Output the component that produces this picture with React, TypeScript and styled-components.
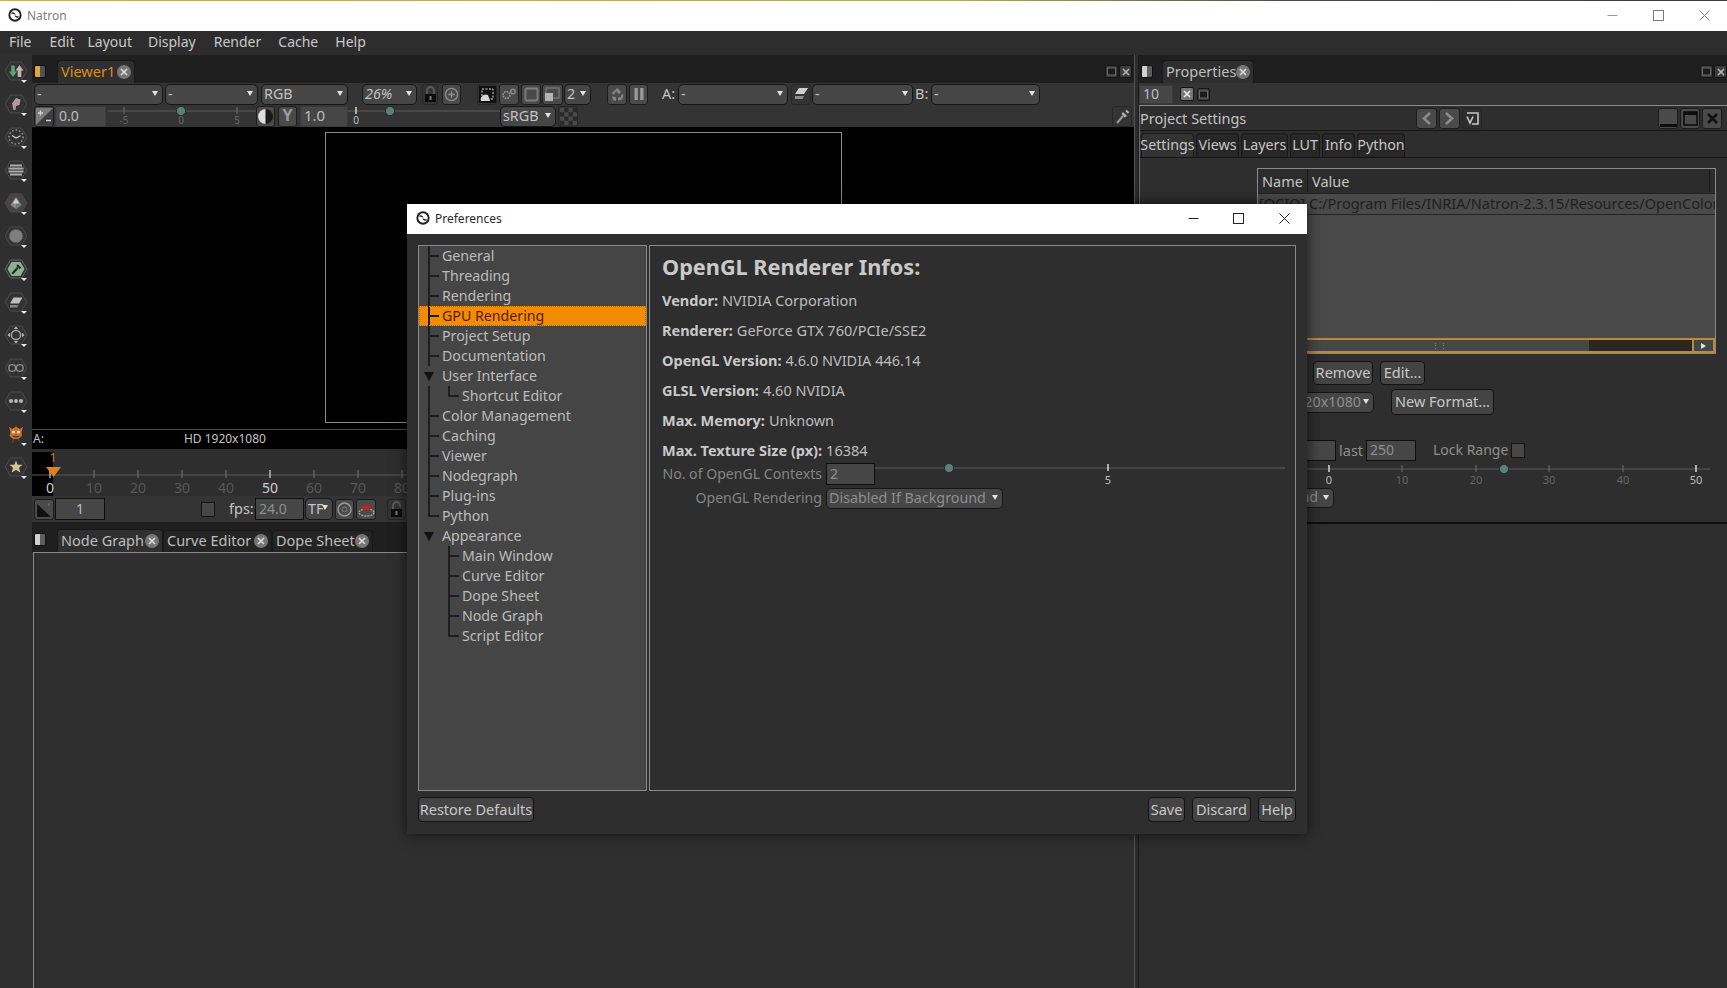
import React from "react";
import styled, { createGlobalStyle, css } from "styled-components";

const GlobalStyle = createGlobalStyle`
  html, body { margin: 0; padding: 0; background: #2e2e2e; }
  * { box-sizing: border-box; }
  body { font-family: "Noto Sans", "Open Sans", sans-serif; font-size: 14px; color: #c8c8c8; }
`;

const offset = css<{ $ml?: number }>`
  flex: none;
  margin-left: ${(p) => p.$ml ?? 0}px;
`;

const Page = styled.div`
  position: relative;
  width: 1727px;
  height: 988px;
  overflow: hidden;
  display: flex;
  flex-direction: column;
  background: #2e2e2e;
`;

/* window chrome */
const TitleBar = styled.div`
  height: 31px;
  flex: none;
  display: flex;
  align-items: center;
  background: #fff;
  border-top: 1px solid;
  border-image: linear-gradient(90deg, #c9ad62, #b9a868 55%, #4a4a4a 75%, #3a3a3a) 1;
  padding: 0 0 2px 8px;
  color: #7d7d7d;
  font-size: 12px;
`;
const TitleText = styled.span`
  margin-left: 5px;
`;
const WinButtons = styled.div`
  margin-left: auto;
  display: flex;
`;
const WinButton = styled.div<{ $w: number }>`
  width: ${(p) => p.$w}px;
  height: 26px;
  display: flex;
  align-items: center;
  justify-content: center;
`;

const MenuBar = styled.div`
  height: 24px;
  flex: none;
  display: flex;
  align-items: center;
  padding: 0 0 4px 9px;
  background: #2d2d2d;
  font-size: 14px;
  color: #c9c9c9;
`;
const MenuItem = styled.span<{ $ml?: number }>`
  ${offset}
`;

const Body = styled.div`
  flex: 1;
  display: flex;
  min-height: 0;
`;

/* left tool rail */
const Rail = styled.div`
  width: 32px;
  flex: none;
  display: flex;
  flex-direction: column;
  padding-top: 0;
  background: #2f2f2f;
`;
const RailItem = styled.div`
  position: relative;
  height: 33px;
  width: 31px;
  flex: none;
  display: flex;
  align-items: center;
  justify-content: center;
  padding-bottom: 2px;
  &::after {
    content: "";
    position: absolute;
    left: 21px;
    bottom: 5px;
    border-left: 3px solid transparent;
    border-right: 3px solid transparent;
    border-top: 3px solid #e8e8e8;
  }
`;

/* panes */
const LeftColumn = styled.div`
  width: 1102px;
  flex: none;
  display: flex;
  flex-direction: column;
`;
const Splitter = styled.div`
  width: 5px;
  flex: none;
  background: #2b2b2b;
  border-left: 1px solid #555;
  border-right: 1px solid #1b1b1b;
`;
const RightColumn = styled.div`
  flex: 1;
  min-width: 0;
  display: flex;
  flex-direction: column;
`;

const TabBar = styled.div<{ $h?: number }>`
  height: ${(p) => p.$h ?? 28}px;
  flex: none;
  display: flex;
  align-items: flex-end;
  background: #1f1f1f;
  padding-left: 2px;
`;
const PaneAnchor = styled.div<{ $mb?: number }>`
  width: 12px;
  height: 13px;
  flex: none;
  border-radius: 2px;
  margin-bottom: ${(p) => p.$mb ?? 5}px;
  background: linear-gradient(90deg, #d0d0d0 50%, #5e5e5e 50%);
  border: 1px solid #111;
`;
const ViewerAnchor = styled(PaneAnchor)`
  background: linear-gradient(90deg, #e0a62e 50%, #50505a 50%);
`;
const PaneTab = styled.div<{ $w: number; $ml?: number; $active?: boolean; $accent?: boolean }>`
  ${offset}
  width: ${(p) => p.$w}px;
  height: ${(p) => (p.$active ? 23 : 22)}px;
  display: flex;
  align-items: center;
  justify-content: space-between;
  padding: 0 3px 3px 3px;
  border-radius: 4px 4px 0 0;
  background: ${(p) => (p.$active ? "#2f2f2f" : "#242424")};
  border: 1px solid #181818;
  border-bottom: 0;
  color: ${(p) => (p.$accent ? "#d98c1f" : "#bdbdbd")};
  font-size: 14.5px;
  white-space: nowrap;
`;
const CloseDot = styled.span`
  width: 14px;
  height: 14px;
  flex: none;
  border-radius: 50%;
  margin-top: 2px;
  background: #767676;
  display: inline-flex;
  align-items: center;
  justify-content: center;
`;
const Corner = styled.div<{ $pr?: number }>`
  margin-left: auto;
  margin-bottom: 5px;
  display: flex;
  gap: 1px;
  padding-right: ${(p) => p.$pr ?? 2}px;
`;
const MiniButton = styled.div<{ $ml?: number; $s?: number; $light?: boolean }>`
  ${offset}
  width: ${(p) => p.$s ?? 13}px;
  height: ${(p) => p.$s ?? 13}px;
  background: ${(p) => (p.$light ? "#777" : "#3c3c3c")};
  border: 1px solid #141414;
  border-radius: 2px;
  display: flex;
  align-items: center;
  justify-content: center;
`;

const ToolRow = styled.div<{ $h?: number; $pl?: number }>`
  height: ${(p) => p.$h ?? 22}px;
  flex: none;
  display: flex;
  align-items: center;
  background: #343434;
  padding-left: ${(p) => p.$pl ?? 2}px;
`;

const Combo = styled.div<{ $w: number; $ml?: number; $dim?: boolean; $h?: number; $mt?: number }>`
  ${offset}
  position: relative;
  width: ${(p) => p.$w}px;
  height: ${(p) => p.$h ?? 21}px;
  margin-top: ${(p) => p.$mt ?? 0}px;
  display: flex;
  align-items: center;
  padding: 0 0 2px 2px;
  background: #464646;
  border: 1px solid #161616;
  border-radius: 5px;
  color: ${(p) => (p.$dim ? "#8e8e8e" : "#c2c2c2")};
  font-size: 14.3px;
  white-space: nowrap;
  overflow: hidden;
  &::after {
    content: "";
    position: absolute;
    right: 4px;
    top: 6px;
    border-left: 3px solid transparent;
    border-right: 3px solid transparent;
    border-top: 5px solid #e2e2e2;
  }
`;
const ToolButton = styled.div<{ $w?: number; $ml?: number; $flat?: boolean }>`
  ${offset}
  width: ${(p) => p.$w ?? 19}px;
  height: 21px;
  display: flex;
  align-items: center;
  justify-content: center;
  background: ${(p) => (p.$flat ? "transparent" : "#4a4a4a")};
  border: 1px solid ${(p) => (p.$flat ? "#262626" : "#1c1c1c")};
  border-radius: 3px;
`;
const YMark = styled.span`
  color: #9a9a9a;
  font-size: 16px;
  font-weight: 700;
  padding-bottom: 2px;
`;
const NumField = styled.div<{ $w: number; $ml?: number; $center?: boolean; $dark?: boolean; $h?: number; $dim?: boolean; $big?: boolean }>`
  ${offset}
  width: ${(p) => p.$w}px;
  height: ${(p) => p.$h ?? 21}px;
  display: flex;
  align-items: center;
  justify-content: ${(p) => (p.$center ? "center" : "flex-start")};
  padding: 0 0 2px ${(p) => (p.$center ? 0 : 3)}px;
  background: #464646;
  border: 1px solid ${(p) => (p.$dark ? "#0e0e0e" : "#3a3a3a")};
  color: ${(p) => (p.$dim ? "#8e8e8e" : "#bdbdbd")};
  font-size: ${(p) => (p.$big ? 15 : 14)}px;
`;
const FieldLabel = styled.span<{ $w?: number; $ml?: number; $dim?: boolean; $fs?: number }>`
  ${offset}
  width: ${(p) => (p.$w ? `${p.$w}px` : "auto")};
  margin-bottom: 2px;
  color: ${(p) => (p.$dim ? "#8e8e8e" : "#c4c4c4")};
  font-size: ${(p) => p.$fs ?? 14.5}px;
  white-space: nowrap;
`;
const Check = styled.div<{ $ml?: number }>`
  ${offset}
  width: 14px;
  height: 15px;
  background: #474747;
  border: 1px solid #141414;
`;

/* viewer */
const Canvas = styled.div`
  height: 302px;
  flex: none;
  background: #000;
  padding: 5px 0 6px 293px;
`;
const Frame = styled.div`
  width: 517px;
  height: 100%;
  border: 1px solid #8a8a8a;
`;
const InfoBar = styled.div`
  height: 20px;
  flex: none;
  display: flex;
  align-items: center;
  background: #000;
  border-top: 1px solid #4a4a4a;
  padding: 0 0 2px 1px;
  color: #c4c4c4;
  font-size: 12px;
`;
const ResLabel = styled.span`
  margin-left: 140px;
`;
const Timeline = styled.div`
  height: 47px;
  flex: none;
  background: #2e2e2e;
  svg { display: block; }
`;
const GraphPane = styled.div`
  flex: 1;
  background: #2f2f2f;
  border-top: 1px solid #8a8a8a;
  border-left: 1px solid #8a8a8a;
  margin-left: 1px;
`;

/* properties */
const SettingsPanel = styled.div`
  height: 419px;
  flex: none;
  display: flex;
  flex-direction: column;
  border-top: 1px solid #8a8a8a;
  border-left: 1px solid #6a6a6a;
  border-bottom: 2px solid #0d0d0d;
`;
const PanelHeader = styled.div`
  height: 25px;
  flex: none;
  display: flex;
  align-items: center;
  border-bottom: 1px solid #161616;
  color: #c4c4c4;
  font-size: 14.5px;
`;
const PanelTabs = styled.div`
  height: 27px;
  flex: none;
  display: flex;
  align-items: flex-end;
  gap: 2px;
  padding-left: 1px;
  border-bottom: 1px solid #141414;
`;
const PanelTab = styled.div<{ $w: number; $active?: boolean }>`
  width: ${(p) => p.$w}px;
  height: 24px;
  display: flex;
  align-items: center;
  justify-content: center;
  padding-bottom: 2px;
  border: 1px solid #191919;
  border-bottom: 0;
  border-radius: 4px 4px 0 0;
  background: ${(p) => (p.$active ? "#333" : "#272727")};
  color: #c6c6c6;
  font-size: 14.3px;
`;
const VarTable = styled.div`
  margin: 10px 0 0 117px;
  width: 459px;
  height: 186px;
  flex: none;
  display: flex;
  flex-direction: column;
  background: #4a4a4a;
  border: 1px solid #8a8a8a;
  overflow: hidden;
`;
const TableRow = styled.div<{ $header?: boolean }>`
  height: ${(p) => (p.$header ? 25 : 21)}px;
  flex: none;
  display: flex;
  align-items: ${(p) => (p.$header ? "center" : "flex-start")};
  padding-bottom: ${(p) => (p.$header ? 1 : 0)}px;
  background: ${(p) => (p.$header ? "#2c2c2c" : "#4a4a4a")};
  color: ${(p) => (p.$header ? "#c4c4c4" : "#202020")};
  white-space: nowrap;
  font-size: 14.5px;
  border-bottom: 1px solid #222;
`;
const Cell = styled.div<{ $w: number; $header?: boolean }>`
  width: ${(p) => p.$w}px;
  flex: none;
  padding-left: ${(p) => (p.$header ? 4 : 1)}px;
  overflow: hidden;
  border-right: ${(p) => (p.$header ? "1px solid #1a1a1a" : "0")};
  height: 100%;
  display: flex;
  align-items: ${(p) => (p.$header ? "center" : "flex-start")};
  line-height: 20px;
  margin-top: ${(p) => (p.$header ? 0 : -1)}px;
`;
const ScrollBar = styled.div`
  margin-top: auto;
  height: 15px;
  flex: none;
  display: flex;
  background: #2b2620;
  border-top: 2px solid #b98a3e;
  border-bottom: 2px solid #b98a3e;
  border-right: 2px solid #b98a3e;
`;
const ScrollThumb = styled.div`
  width: 331px;
  background: #474747;
  display: flex;
  align-items: center;
  color: #9a9a9a;
  font-size: 7px;
  letter-spacing: 1px;
  padding-left: 174px;
`;
const ScrollArrow = styled.div`
  margin-left: auto;
  width: 21px;
  display: flex;
  align-items: center;
  justify-content: center;
  background: #454545;
  border-left: 2px solid #b98a3e;
  &::after {
    content: "";
    border-top: 3px solid transparent;
    border-bottom: 3px solid transparent;
    border-left: 5px solid #e0e0e0;
  }
`;
const FormRow = styled.div<{ $mt: number; $pl: number; $h: number }>`
  margin-top: ${(p) => p.$mt}px;
  padding-left: ${(p) => p.$pl}px;
  height: ${(p) => p.$h}px;
  flex: none;
  display: flex;
  align-items: center;
`;
const PushButton = styled.div<{ $w: number; $ml?: number; $h?: number }>`
  ${offset}
  width: ${(p) => p.$w}px;
  height: ${(p) => p.$h ?? 25}px;
  display: flex;
  align-items: center;
  justify-content: center;
  padding-bottom: 2px;
  background: #444;
  border: 1px solid #121212;
  border-radius: 4px;
  color: #c8c8c8;
  font-size: 14.5px;
  white-space: nowrap;
`;
const RightFill = styled.div`
  flex: 1;
  background: #2e2e2e;
`;

/* preferences dialog */
const Dialog = styled.div`
  position: absolute;
  left: 407px;
  top: 204px;
  width: 900px;
  height: 630px;
  display: flex;
  flex-direction: column;
  background: #2e2e2e;
  box-shadow: 0 0 14px rgba(0, 0, 0, 0.65);
`;
const DialogTitle = styled.div`
  height: 30px;
  flex: none;
  display: flex;
  align-items: center;
  padding: 0 0 2px 9px;
  background: #fff;
  color: #2a2a2a;
  font-size: 12px;
`;
const DialogMain = styled.div`
  height: 546px;
  flex: none;
  margin: 11px 11px 0 11px;
  display: flex;
  gap: 2px;
`;
const Tree = styled.div`
  width: 229px;
  flex: none;
  display: flex;
  flex-direction: column;
  background: #454545;
  border: 1px solid #8a8a8a;
`;
const TreeRow = styled.div<{ $selected?: boolean }>`
  height: 20px;
  flex: none;
  display: flex;
  align-items: center;
  background: ${(p) => (p.$selected ? "#f28c02" : "transparent")};
  color: ${(p) => (p.$selected ? "#581a02" : "#bcbcbc")};
  outline: ${(p) => (p.$selected ? "1px dotted #b56a08" : "none")};
  outline-offset: -1px;
  font-size: 14.2px;
  white-space: nowrap;
`;
const Guide = styled.span<{ $kind: "tee" | "ell" | "pipe" | "open" | "none" }>`
  width: 20px;
  height: 20px;
  flex: none;
  display: inline-flex;
  align-items: center;
  justify-content: center;
  background-repeat: no-repeat;
  ${(p) =>
    p.$kind === "tee" &&
    css`
      background-image: linear-gradient(#1e1e1e, #1e1e1e), linear-gradient(#1e1e1e, #1e1e1e);
      background-size: 2px 20px, 9px 2px;
      background-position: 9px 0, 11px 9px;
    `}
  ${(p) =>
    p.$kind === "ell" &&
    css`
      background-image: linear-gradient(#1e1e1e, #1e1e1e), linear-gradient(#1e1e1e, #1e1e1e);
      background-size: 2px 11px, 9px 2px;
      background-position: 9px 0, 11px 9px;
    `}
  ${(p) =>
    p.$kind === "pipe" &&
    css`
      background-image: linear-gradient(#1e1e1e, #1e1e1e);
      background-size: 2px 20px;
      background-position: 9px 0;
    `}
  ${(p) =>
    p.$kind === "open" &&
    css`
      &::before {
        content: "";
        margin-left: -1px;
        border-left: 5px solid transparent;
        border-right: 5px solid transparent;
        border-top: 9px solid #111;
      }
    `}
`;
const TreeLabel = styled.span`
  margin: 0 0 2px 3px;
`;
const InfoPane = styled.div`
  flex: 1;
  display: flex;
  flex-direction: column;
  padding-left: 12px;
  background: #2e2e2e;
  border: 1px solid #8a8a8a;
`;
const InfoTitle = styled.div`
  height: 40px;
  flex: none;
  display: flex;
  align-items: center;
  padding-top: 1px;
  font-size: 21.7px;
  font-weight: 700;
  color: #c9c9c9;
`;
const InfoRow = styled.div`
  height: 30px;
  flex: none;
  display: flex;
  align-items: center;
  gap: 4px;
  padding-bottom: 2px;
  font-size: 14.5px;
  color: #bdbdbd;
  b { font-weight: 700; color: #c9c9c9; }
`;
const ParamRow = styled.div<{ $mt?: number }>`
  height: 24px;
  flex: none;
  display: flex;
  align-items: center;
  margin-top: ${(p) => p.$mt ?? 0}px;
`;
const ParamLabel = styled.span`
  width: 160px;
  flex: none;
  margin-bottom: 2px;
  text-align: right;
  color: #858585;
  font-size: 14.1px;
  white-space: nowrap;
`;
const DialogFooter = styled.div`
  flex: 1;
  display: flex;
  align-items: flex-start;
  padding: 6px 11px 0 11px;
`;
const FooterRight = styled.div`
  margin-left: auto;
  display: flex;
  gap: 7px;
`;

const Svg = styled.svg`
  display: block;
  flex: none;
`;

const Logo = ({ s = 14 }: { s?: number }) => (
  <Svg width={s} height={s} viewBox="0 0 16 16">
    <circle cx="8" cy="8" r="7.6" fill="#222" />
    <circle cx="8" cy="8" r="5.4" fill="#fff" />
    <path d="M3 6 C5 4 8 4.5 8.5 8 C6.8 6.8 5 6.6 3 6Z" fill="#222" />
    <path d="M13 10 C11 12 8 11.5 7.5 8 C9.2 9.2 11 9.4 13 10Z" fill="#222" />
  </Svg>
);

const CloseX = ({ c = "#dcdcdc" }: { c?: string }) => (
  <Svg width="8" height="8" viewBox="0 0 8 8">
    <path d="M1 1 L7 7 M7 1 L1 7" stroke={c} strokeWidth="1.6" />
  </Svg>
);

const Hex = ({ children, fill = "#323232", line = "#4c4c4c" }: { children?: React.ReactNode; fill?: string; line?: string }) => (
  <Svg width="24" height="24" viewBox="0 0 24 24">
    <polygon points="6.5,3 17.5,3 23,12 17.5,21 6.5,21 1,12" fill={fill} stroke={line} strokeWidth="1" />
    {children}
  </Svg>
);

const railIcons: React.ReactNode[] = [
  <Hex key="image">
    <path d="M9 18 L5 12.5 H7.2 V6.5 H10.8 V12.5 H13 Z" fill="#5aa56c" />
    <path d="M15.5 6 L19.5 11.5 H17.3 V18 H13.7 V11.5 H11.5 Z" fill="#c9b2ac" />
  </Hex>,
  <Hex key="draw">
    <path d="M9.5 18 L8 11.5 L12 6 L16.5 7.5 L15.5 13 L12 14 L11.5 18 Z" fill="#b696a0" />
  </Hex>,
  <Hex key="time">
    <circle cx="12" cy="12" r="7" fill="none" stroke="#bcbcbc" strokeWidth="1.2" strokeDasharray="1.4 2.2" />
    <path d="M8 10.5 L12 13 L16.5 10.8" fill="none" stroke="#d4d4d4" strokeWidth="1.1" />
  </Hex>,
  <Hex key="channel">
    <path d="M6 7.5 H18 M4.5 10.5 H19.5 M4.5 13.5 H19.5 M6 16.5 H18" stroke="#ababab" strokeWidth="2" />
  </Hex>,
  <Hex key="color" fill="#454545">
    <path d="M12 6 L17.5 14 L12 18 L6.5 14 Z" fill="#8e8788" />
    <path d="M12 7 L15 12.5 L9 12.5 Z" fill="#d0d0d0" />
    <path d="M17.5 14 L12 18 L12 12.5 Z" fill="#62806a" />
  </Hex>,
  <Hex key="filter">
    <circle cx="12" cy="12" r="6.6" fill="#7e7e7e" stroke="#6e6e6e" strokeDasharray="1 1" />
  </Hex>,
  <Hex key="keyer" line="#5a6f60">
    <polygon points="7.5,5 16.5,5 20.5,12 16.5,19 7.5,19 3.5,12" fill="#8fae99" />
    <path d="M9 17.5 L7.5 16 L13 10 L14.5 11.5 Z" fill="#1c2a22" />
    <path d="M13 8 L16.5 11.5" stroke="#1c2a22" strokeWidth="2.2" />
  </Hex>,
  <Hex key="merge">
    <path d="M9.5 7.5 H18.5 L15 13.5 H6 Z" fill="#bdbdbd" />
    <path d="M6 15 H14.5 L13 17.5 H6 Z" fill="#848484" />
  </Hex>,
  <Hex key="transform">
    <circle cx="12" cy="12" r="4.6" fill="none" stroke="#a4a4a4" strokeWidth="1.5" />
    <path d="M12 3.5 L14.2 6 H9.8Z M12 20.5 L14.2 18 H9.8Z M3.5 12 L6 9.8 V14.2Z M20.5 12 L18 9.8 V14.2Z" fill="#b8b8b8" />
  </Hex>,
  <Hex key="views">
    <circle cx="8.2" cy="12" r="3.4" fill="none" stroke="#8c8c8c" strokeWidth="1.4" />
    <circle cx="15.8" cy="12" r="3.4" fill="none" stroke="#8c8c8c" strokeWidth="1.4" />
  </Hex>,
  <Hex key="other">
    <circle cx="7" cy="12" r="2.1" fill="#b4b4b4" />
    <circle cx="12" cy="12" r="2.1" fill="#b4b4b4" />
    <circle cx="17" cy="12" r="2.1" fill="#b4b4b4" />
  </Hex>,
  <Svg key="gmic" width="24" height="24" viewBox="0 0 24 24">
    <path d="M5 5 L8.5 7 L12 4.5 L15.5 7 L19 5 L17.5 10 L18 14 L14 17 L9 17 L5.5 14 L6.5 10Z" fill="#c96f2a" />
    <circle cx="9.5" cy="10" r="1.6" fill="#eedcc0" />
    <circle cx="14.5" cy="10" r="1.6" fill="#eedcc0" />
    <path d="M9 14 C10.5 15.2 13.5 15.2 15 14" stroke="#5e2c10" strokeWidth="1.2" fill="none" />
    <path d="M9.5 17 L8.5 21 M14 17 L15 19" stroke="#4e4e4e" strokeWidth="1.3" />
  </Svg>,
  <Hex key="extra">
    <path d="M12 5.5 L13.6 9.8 L18.5 9.8 L15 12.8 L16.4 17.5 L12 15 L7.6 17.5 L9 12.8 L5.5 9.8 L10.4 9.8 Z" fill="#cdc797" />
  </Hex>,
];

const Plus = () => (
  <Svg width="15" height="15" viewBox="0 0 16 16">
    <circle cx="8" cy="8" r="6.5" fill="none" stroke="#8e8e8e" strokeWidth="1.4" />
    <path d="M8 4.5 V11.5 M4.5 8 H11.5" stroke="#8e8e8e" strokeWidth="1.5" />
  </Svg>
);
const LockIcon = ({ open }: { open?: boolean }) => (
  <Svg width="13" height="17" viewBox="0 0 13 17">
    <path d={open ? "M3 8 V4.5 A3.5 3.5 0 0 1 10 4.5 V5.5" : "M3 8 V4.5 A3.5 3.5 0 0 1 10 4.5 V8"} fill="none" stroke="#5c5c5c" strokeWidth="1.8" />
    <rect x="1" y="8" width="11" height="8" fill="#0d0d0d" />
    <rect x="5.5" y="10" width="2" height="4" fill="#7a7a7a" />
  </Svg>
);
const RegionIcon = () => (
  <Svg width="17" height="17" viewBox="0 0 17 17">
    <rect x="0" y="0" width="17" height="17" fill="#111" />
    <rect x="3" y="3" width="11" height="10" fill="none" stroke="#e0e0e0" strokeDasharray="2 1.5" />
    <path d="M2 15 A5 5 0 0 1 9 9 L11 15 Z" fill="#d6d6d6" />
  </Svg>
);
const GearsIcon = () => (
  <Svg width="16" height="14" viewBox="0 0 16 14">
    <circle cx="5.5" cy="8" r="3.4" fill="none" stroke="#8c8c8c" strokeWidth="1.8" strokeDasharray="1.8 0.8" />
    <circle cx="12" cy="4.5" r="2.2" fill="none" stroke="#8c8c8c" strokeWidth="1.4" />
  </Svg>
);
const FrameIcon = () => (
  <Svg width="15" height="15" viewBox="0 0 15 15">
    <rect x="1.5" y="1.5" width="12" height="12" rx="1.5" fill="none" stroke="#7e7e7e" strokeWidth="1.8" />
  </Svg>
);
const TinyFrame = () => (
  <Svg width="9" height="9" viewBox="0 0 9 9">
    <rect x="0.5" y="1" width="8" height="7" fill="#1b1b1b" stroke="#6a6a6a" />
  </Svg>
);
const ProxyIcon = () => (
  <Svg width="15" height="14" viewBox="0 0 15 14">
    <rect x="1" y="1" width="13" height="10" fill="none" stroke="#787878" strokeWidth="1.3" />
    <rect x="0" y="6" width="8" height="8" fill="#b4b4b4" />
  </Svg>
);
const RecycleIcon = () => (
  <Svg width="15" height="15" viewBox="0 0 15 15">
    <path d="M7.5 1 L11 5 L9 7 L6 4 L4 8 L1.5 6 Z" fill="#858585" />
    <path d="M13.5 7 L12.5 12.5 L8 13.5 L8 10.5 L11 10 L11 8 Z" fill="#858585" />
    <path d="M2 9 L6 10.5 V14 L3 13 Z" fill="#858585" />
  </Svg>
);
const PauseIcon = () => (
  <Svg width="12" height="14" viewBox="0 0 12 14">
    <path d="M1.5 1 H4.8 V13 H1.5Z M7.2 1 H10.5 V13 H7.2Z" fill="#9a9a9a" />
  </Svg>
);
const PlatesIcon = () => (
  <Svg width="15" height="14" viewBox="0 0 15 14">
    <path d="M5 1 H14 L10 7 H1 Z" fill="#cfcfcf" />
    <path d="M1 9 H10 L8.5 12 H1 Z" fill="#8e8e8e" />
  </Svg>
);
const GainIcon = () => (
  <Svg width="17" height="17" viewBox="0 0 17 17">
    <rect width="17" height="17" fill="#7c7c7c" />
    <path d="M0 17 L17 0 V17 Z" fill="#3c3c3c" />
    <path d="M2 5 H7 M4.5 2.5 V7.5 M10 12.5 H15" stroke="#d0d0d0" strokeWidth="1.3" />
  </Svg>
);
const ContrastIcon = () => (
  <Svg width="17" height="17" viewBox="0 0 17 17">
    <circle cx="8.5" cy="8.5" r="7.5" fill="#1a1a1a" />
    <path d="M8.5 1 A7.5 7.5 0 0 0 8.5 16 Z" fill="#dcdcdc" />
  </Svg>
);
const PinIcon = () => (
  <Svg width="15" height="15" viewBox="0 0 15 15">
    <path d="M2 14 L8 7" stroke="#9a9a9a" strokeWidth="2" />
    <path d="M8 3 L12 7 L10 8.5 L6.5 5 Z" fill="#b4b4b4" />
    <path d="M11 1.5 L13.5 4" stroke="#b4b4b4" strokeWidth="2" />
  </Svg>
);
const Checker = () => (
  <Svg width="17" height="17" viewBox="0 0 4 4">
    <rect width="4" height="4" fill="#2a2a2a" />
    <path d="M0 0H1V1H0Z M2 0H3V1H2Z M1 1H2V2H1Z M3 1H4V2H3Z M0 2H1V3H0Z M2 2H3V3H2Z M1 3H2V4H1Z M3 3H4V4H3Z" fill="#4a4a4a" />
  </Svg>
);
const TurboIcon = () => (
  <Svg width="15" height="15" viewBox="0 0 15 15">
    <circle cx="7.5" cy="7.5" r="6.5" fill="none" stroke="#9c9c9c" strokeWidth="1.4" />
    <circle cx="7.5" cy="7.5" r="2.5" fill="none" stroke="#7c7c7c" />
  </Svg>
);
const CacheIcon = () => (
  <Svg width="17" height="15" viewBox="0 0 17 15">
    <ellipse cx="8.5" cy="10.5" rx="7.5" ry="3.5" fill="none" stroke="#a8a8a8" strokeWidth="1.3" strokeDasharray="2 1" />
    <path d="M3 4 H14 L12 8 H5 Z" fill="#c4211e" />
  </Svg>
);
const ToggleIcon = () => (
  <Svg width="17" height="17" viewBox="0 0 17 17">
    <path d="M1 3 L15 16 H1 Z" fill="#111" />
    <path d="M13 2 V5" stroke="#777" />
  </Svg>
);
const Chevron = ({ dir }: { dir: "l" | "r" }) => (
  <Svg width="11" height="13" viewBox="0 0 11 13">
    <path d={dir === "l" ? "M9 1 L3 6.5 L9 12" : "M2 1 L8 6.5 L2 12"} fill="none" stroke="#8c8c8c" strokeWidth="2.6" />
  </Svg>
);
const BackIcon = () => (
  <Svg width="13" height="13" viewBox="0 0 13 13">
    <path d="M1 1 H12 V12 H6" fill="none" stroke="#c8c8c8" strokeWidth="1.6" />
    <path d="M1 4.5 L4 11 L7 4.5" fill="none" stroke="#c8c8c8" strokeWidth="1.6" />
  </Svg>
);
const PanelMin = () => (
  <Svg width="17" height="17" viewBox="0 0 17 17">
    <rect x="0" y="14" width="17" height="3" fill="#0d0d0d" />
  </Svg>
);
const PanelMax = () => (
  <Svg width="15" height="15" viewBox="0 0 15 15">
    <rect x="1" y="1" width="13" height="13" fill="none" stroke="#0d0d0d" strokeWidth="1.6" />
    <rect x="1" y="1" width="13" height="3" fill="#0d0d0d" />
  </Svg>
);
const PanelClose = () => (
  <Svg width="13" height="13" viewBox="0 0 13 13">
    <path d="M2 2 L11 11 M11 2 L2 11" stroke="#111" strokeWidth="2.6" />
  </Svg>
);

type Tick = { x: number; label: string; bright?: boolean };

const Scale = ({
  width,
  height,
  lineY,
  labelY,
  ticks,
  knobs,
  from = 0,
  fontSize = 10,
}: {
  width: number;
  height: number;
  lineY: number;
  labelY: number;
  ticks: Tick[];
  knobs?: number[];
  from?: number;
  fontSize?: number;
}) => (
  <Svg width={width} height={height} viewBox={`0 0 ${width} ${height}`}>
    <line x1={from} y1={lineY} x2={width} y2={lineY} stroke="#5c5c5c" />
    {ticks.map((t) => (
      <g key={t.label + t.x}>
        <line x1={t.x} y1={lineY - 4} x2={t.x} y2={lineY + 3} stroke={t.bright ? "#d0d0d0" : "#6e6e6e"} strokeWidth={t.bright ? 1.6 : 1} />
        <text x={t.x} y={labelY} textAnchor="middle" fontFamily="Noto Sans, sans-serif" fontSize={fontSize} fill={t.bright ? "#bdbdbd" : "#666"}>
          {t.label}
        </text>
      </g>
    ))}
    {knobs?.map((k) => (
      <circle key={k} cx={k} cy={lineY} r="4.6" fill="#5e7f78" stroke="#24302d" />
    ))}
  </Svg>
);

const treeItems: { label: string; guides: ("tee" | "ell" | "pipe" | "open" | "none")[]; selected?: boolean }[] = [
  { label: "General", guides: ["tee"] },
  { label: "Threading", guides: ["tee"] },
  { label: "Rendering", guides: ["tee"] },
  { label: "GPU Rendering", guides: ["tee"], selected: true },
  { label: "Project Setup", guides: ["tee"] },
  { label: "Documentation", guides: ["tee"] },
  { label: "User Interface", guides: ["open"] },
  { label: "Shortcut Editor", guides: ["pipe", "ell"] },
  { label: "Color Management", guides: ["tee"] },
  { label: "Caching", guides: ["tee"] },
  { label: "Viewer", guides: ["tee"] },
  { label: "Nodegraph", guides: ["tee"] },
  { label: "Plug-ins", guides: ["tee"] },
  { label: "Python", guides: ["ell"] },
  { label: "Appearance", guides: ["open"] },
  { label: "Main Window", guides: ["none", "tee"] },
  { label: "Curve Editor", guides: ["none", "tee"] },
  { label: "Dope Sheet", guides: ["none", "tee"] },
  { label: "Node Graph", guides: ["none", "tee"] },
  { label: "Script Editor", guides: ["none", "ell"] },
];

const infos = [
  ["Vendor:", "NVIDIA Corporation"],
  ["Renderer:", "GeForce GTX 760/PCIe/SSE2"],
  ["OpenGL Version:", "4.6.0 NVIDIA 446.14"],
  ["GLSL Version:", "4.60 NVIDIA"],
  ["Max. Memory:", "Unknown"],
  ["Max. Texture Size (px):", "16384"],
];

const menus = [
  ["File", 0],
  ["Edit", 18],
  ["Layout", 13],
  ["Display", 16],
  ["Render", 18],
  ["Cache", 17],
  ["Help", 17],
] as const;

const WinGlyph = ({ kind, c }: { kind: "min" | "max" | "close"; c: string }) => (
  <Svg width="11" height="11" viewBox="0 0 11 11">
    {kind === "min" && <path d="M0.5 5.5 H10.5" stroke={c} />}
    {kind === "max" && <rect x="0.5" y="0.5" width="10" height="10" fill="none" stroke={c} />}
    {kind === "close" && <path d="M0.5 0.5 L10.5 10.5 M10.5 0.5 L0.5 10.5" stroke={c} />}
  </Svg>
);

const App = () => (
  <Page>
    <GlobalStyle />
    <TitleBar>
      <Logo />
      <TitleText>Natron</TitleText>
      <WinButtons>
        <WinButton $w={46}><WinGlyph kind="min" c="#9a9a9a" /></WinButton>
        <WinButton $w={46}><WinGlyph kind="max" c="#7a7a7a" /></WinButton>
        <WinButton $w={46}><WinGlyph kind="close" c="#7a7a7a" /></WinButton>
      </WinButtons>
    </TitleBar>
    <MenuBar>
      {menus.map(([m, ml]) => (
        <MenuItem key={m} $ml={ml}>{m}</MenuItem>
      ))}
    </MenuBar>
    <Body>
      <Rail>
        {railIcons.map((icon, i) => (
          <RailItem key={i}>{icon}</RailItem>
        ))}
      </Rail>
      <LeftColumn>
        <TabBar>
          <ViewerAnchor />
          <PaneTab $ml={11} $w={78} $active $accent>
            Viewer1
            <CloseDot><CloseX /></CloseDot>
          </PaneTab>
          <Corner>
            <MiniButton><TinyFrame /></MiniButton>
            <MiniButton><CloseX c="#b4b4b4" /></MiniButton>
          </Corner>
        </TabBar>
        <ToolRow>
          <Combo $w={129}>-</Combo>
          <Combo $ml={2} $w={93}>-</Combo>
          <Combo $ml={3} $w={87}>RGB</Combo>
          <Combo $ml={14} $w={55}><i>26%</i></Combo>
          <ToolButton $ml={5} $w={16} $flat><LockIcon /></ToolButton>
          <ToolButton $ml={4} $w={19}><Plus /></ToolButton>
          <ToolButton $ml={16} $w={20} $flat><RegionIcon /></ToolButton>
          <ToolButton $ml={2} $w={20}><GearsIcon /></ToolButton>
          <ToolButton $ml={2} $w={20}><FrameIcon /></ToolButton>
          <ToolButton $ml={1} $w={21}><ProxyIcon /></ToolButton>
          <Combo $ml={1} $w={27}>2</Combo>
          <ToolButton $ml={16} $w={20}><RecycleIcon /></ToolButton>
          <ToolButton $ml={2} $w={19}><PauseIcon /></ToolButton>
          <FieldLabel $ml={14} $w={15}>A:</FieldLabel>
          <Combo $ml={1} $w={110}>-</Combo>
          <ToolButton $ml={3} $w={20} $flat><PlatesIcon /></ToolButton>
          <Combo $ml={1} $w={101}>-</Combo>
          <FieldLabel $ml={2} $w={16}>B:</FieldLabel>
          <Combo $w={109}>-</Combo>
        </ToolRow>
        <ToolRow>
          <ToolButton $w={20}><GainIcon /></ToolButton>
          <NumField $ml={1} $w={51}>0.0</NumField>
          <Scale
            width={150}
            height={22}
            lineY={6}
            labelY={19}
            from={2}
            ticks={[
              { x: 18, label: "-5" },
              { x: 75, label: "0" },
              { x: 131, label: "5" },
            ]}
            knobs={[75]}
          />
          <ToolButton $w={19}><ContrastIcon /></ToolButton>
          <ToolButton $ml={3} $w={19}><YMark>Y</YMark></ToolButton>
          <NumField $ml={3} $w={48} $big>1.0</NumField>
          <Scale
            width={152}
            height={22}
            lineY={6}
            labelY={19}
            ticks={[{ x: 8, label: "0", bright: true }]}
            knobs={[42]}
          />
          <Combo $w={56}>sRGB</Combo>
          <ToolButton $ml={2} $w={20} $flat><Checker /></ToolButton>
          <ToolButton $ml={534} $w={20} $flat><PinIcon /></ToolButton>
        </ToolRow>
        <Canvas>
          <Frame />
        </Canvas>
        <InfoBar>
          A:
          <ResLabel>HD 1920x1080</ResLabel>
        </InfoBar>
        <Timeline>
          <Svg width="1102" height="47" viewBox="0 0 1102 47">
            <rect x="0" y="3" width="21" height="44" fill="#000" />
            <line x1="0" y1="26" x2="1102" y2="26" stroke="#5a5a5a" />
            {[0, 10, 20, 30, 40, 50, 60, 70, 80].map((n) => (
              <g key={n}>
                <line x1={18 + n * 4.4} y1={21} x2={18 + n * 4.4} y2={29} stroke={n === 0 || n === 50 ? "#d8d8d8" : "#6a6a6a"} strokeWidth="1.2" />
                <text x={18 + n * 4.4} y={44} textAnchor="middle" fontFamily="Noto Sans, sans-serif" fontSize="14" fill={n === 0 || n === 50 ? "#cfcfcf" : "#585858"}>
                  {n}
                </text>
              </g>
            ))}
            <text x={21} y={13} textAnchor="middle" fontFamily="Noto Sans, sans-serif" fontSize="13" fill="#cc6d1e">1</text>
            <polygon points="14,18 29,18 21.5,28" fill="#e5801f" />
          </Svg>
        </Timeline>
        <ToolRow $h={26}>
          <ToolButton $w={20}><ToggleIcon /></ToolButton>
          <NumField $ml={1} $w={50} $center $dark $h={22}>1</NumField>
          <Check $ml={96} />
          <FieldLabel $ml={14} $w={26}>fps:</FieldLabel>
          <NumField $w={49} $dark $h={22} $dim>24.0</NumField>
          <Combo $ml={1} $w={28} $h={22}>TF</Combo>
          <ToolButton $ml={2} $w={19}><TurboIcon /></ToolButton>
          <ToolButton $ml={2} $w={20}><CacheIcon /></ToolButton>
          <ToolButton $ml={11} $w={19} $flat><LockIcon open /></ToolButton>
        </ToolRow>
        <TabBar $h={30}>
          <PaneAnchor $mb={6} />
          <PaneTab $ml={11} $w={106} $active>
            Node Graph
            <CloseDot><CloseX /></CloseDot>
          </PaneTab>
          <PaneTab $w={109}>
            Curve Editor
            <CloseDot><CloseX /></CloseDot>
          </PaneTab>
          <PaneTab $w={101}>
            Dope Sheet
            <CloseDot><CloseX /></CloseDot>
          </PaneTab>
        </TabBar>
        <GraphPane />
      </LeftColumn>
      <Splitter />
      <RightColumn>
        <TabBar>
          <PaneAnchor />
          <PaneTab $ml={9} $w={92} $active>
            Properties
            <CloseDot><CloseX /></CloseDot>
          </PaneTab>
          <Corner $pr={0}>
            <MiniButton><TinyFrame /></MiniButton>
            <MiniButton><CloseX c="#b4b4b4" /></MiniButton>
          </Corner>
        </TabBar>
        <ToolRow $pl={0}>
          <NumField $w={34} $h={19}>10</NumField>
          <MiniButton $ml={7} $s={14} $light><CloseX c="#f0f0f0" /></MiniButton>
          <MiniButton $ml={3} $s={13}><TinyFrame /></MiniButton>
        </ToolRow>
        <SettingsPanel>
          <PanelHeader>
            Project Settings
            <ToolButton $ml={170} $w={21}><Chevron dir="l" /></ToolButton>
            <ToolButton $ml={2} $w={21}><Chevron dir="r" /></ToolButton>
            <ToolButton $ml={2} $w={20} $flat><BackIcon /></ToolButton>
            <ToolButton $ml={176} $w={20}><PanelMin /></ToolButton>
            <ToolButton $ml={2} $w={20}><PanelMax /></ToolButton>
            <ToolButton $ml={2} $w={20}><PanelClose /></ToolButton>
          </PanelHeader>
          <PanelTabs>
            <PanelTab $w={53} $active>Settings</PanelTab>
            <PanelTab $w={43}>Views</PanelTab>
            <PanelTab $w={47}>Layers</PanelTab>
            <PanelTab $w={30}>LUT</PanelTab>
            <PanelTab $w={33}>Info</PanelTab>
            <PanelTab $w={48}>Python</PanelTab>
          </PanelTabs>
          <VarTable>
            <TableRow $header>
              <Cell $w={50} $header>Name</Cell>
              <Cell $w={402} $header>Value</Cell>
            </TableRow>
            <TableRow>
              <Cell $w={50}>[OCIO]</Cell>
              <Cell $w={407}>C:/Program Files/INRIA/Natron-2.3.15/Resources/OpenColorIO-Configs</Cell>
            </TableRow>
            <ScrollBar>
              <ScrollThumb>⋮⋮</ScrollThumb>
              <ScrollArrow />
            </ScrollBar>
          </VarTable>
          <FormRow $mt={6} $pl={173} $h={25}>
            <PushButton $w={60} $h={24}>Remove</PushButton>
            <PushButton $ml={7} $w={45} $h={24}>Edit...</PushButton>
          </FormRow>
          <FormRow $mt={4} $pl={145} $h={26}>
            <Combo $w={89} $h={21} $dim>1920x1080</Combo>
            <PushButton $ml={17} $w={103} $h={26}>New Format...</PushButton>
          </FormRow>
          <FormRow $mt={25} $pl={148} $h={21}>
            <NumField $w={48} $dark $h={21} />
            <FieldLabel $ml={3} $w={27} $dim>last</FieldLabel>
            <NumField $w={50} $dark $h={21} $dim>250</NumField>
            <FieldLabel $ml={17} $w={78} $dim $fs={14}>Lock Range</FieldLabel>
            <Check />
          </FormRow>
          <Scale
            width={570}
            height={26}
            lineY={8}
            labelY={23}
            ticks={[
              { x: 189, label: "0", bright: true },
              { x: 262, label: "10" },
              { x: 336, label: "20" },
              { x: 409, label: "30" },
              { x: 483, label: "40" },
              { x: 556, label: "50", bright: true },
            ]}
            knobs={[364]}
            fontSize={11}
          />
          <FormRow $mt={0} $pl={131} $h={21}>
            <Combo $w={63} $h={20} $dim>Round</Combo>
          </FormRow>
        </SettingsPanel>
        <RightFill />
      </RightColumn>
    </Body>

    <Dialog>
      <DialogTitle>
        <Logo />
        <TitleText>Preferences</TitleText>
        <WinButtons>
          <WinButton $w={45}><WinGlyph kind="min" c="#222" /></WinButton>
          <WinButton $w={45}><WinGlyph kind="max" c="#222" /></WinButton>
          <WinButton $w={46}><WinGlyph kind="close" c="#222" /></WinButton>
        </WinButtons>
      </DialogTitle>
      <DialogMain>
        <Tree>
          {treeItems.map((item) => (
            <TreeRow key={item.label} $selected={item.selected}>
              {item.guides.map((g, i) => (
                <Guide key={i} $kind={g} />
              ))}
              <TreeLabel>{item.label}</TreeLabel>
            </TreeRow>
          ))}
        </Tree>
        <InfoPane>
          <InfoTitle>OpenGL Renderer Infos:</InfoTitle>
          {infos.map(([k, v]) => (
            <InfoRow key={k}>
              <b>{k}</b> {v}
            </InfoRow>
          ))}
          <ParamRow $mt={-4}>
            <ParamLabel>No. of OpenGL Contexts</ParamLabel>
            <NumField $ml={4} $w={49} $dark $h={22} $dim>2</NumField>
            <Scale
              width={410}
              height={24}
              lineY={6}
              labelY={22}
              ticks={[{ x: 233, label: "5", bright: true }]}
              knobs={[74]}
              fontSize={11}
            />
          </ParamRow>
          <ParamRow>
            <ParamLabel>OpenGL Rendering</ParamLabel>
            <Combo $ml={4} $w={177} $dim $mt={1}>Disabled If Background</Combo>
          </ParamRow>
        </InfoPane>
      </DialogMain>
      <DialogFooter>
        <PushButton $w={116} $h={25}>Restore Defaults</PushButton>
        <FooterRight>
          <PushButton $w={37} $h={25}>Save</PushButton>
          <PushButton $w={59} $h={25}>Discard</PushButton>
          <PushButton $w={38} $h={25}>Help</PushButton>
        </FooterRight>
      </DialogFooter>
    </Dialog>
  </Page>
);

export default App;
